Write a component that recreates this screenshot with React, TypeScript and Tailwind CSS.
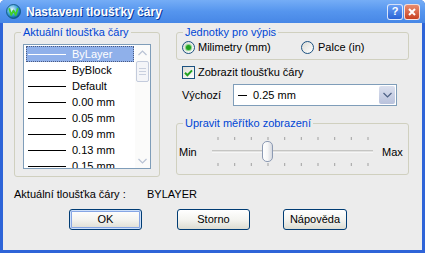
import React from 'react';

// Windows XP style "Nastavení tloušťky čáry" dialog

const font = { fontFamily: '"Liberation Sans", Arial, sans-serif' };

const weights = [
  { label: 'ByLayer', selected: true },
  { label: 'ByBlock' },
  { label: 'Default' },
  { label: '0.00 mm' },
  { label: '0.05 mm' },
  { label: '0.09 mm' },
  { label: '0.13 mm' },
  { label: '0.15 mm' },
];

const ticks = [6, 22.7, 39.3, 56, 72.7, 89.3, 106, 122.7, 139.3, 156];

// --- small pieces --- //
function GroupBox({ title, className, children }: { title: string; className?: string; children?: React.ReactNode }) {
  return (
    <div className={`relative border border-[#d0d0bf] rounded-[3px] ${className ?? ''}`}>
      <span className="absolute -top-[7px] left-[6px] px-[2px] bg-[#ececec] text-[#0046d5] text-[11px] leading-[13px]">
        {title}
      </span>
      {children}
    </div>
  );
}

function Radio({ checked }: { checked?: boolean }) {
  return (
    <span className="w-[13px] h-[13px] rounded-full border border-[#1c5180] bg-linear-to-br from-[#dcdcd6] to-white flex items-center justify-center shrink-0">
      {checked && <span className="w-[5px] h-[5px] rounded-full bg-[#21a121] shadow-[0_0_1px_1px_#7fd17f]" />}
    </span>
  );
}

function Chevron({ up, color }: { up?: boolean; color: string }) {
  return (
    <svg width="9" height="6" viewBox="0 0 9 6">
      <path d={up ? 'M0.5 5L4.5 1L8.5 5' : 'M0.5 1L4.5 5L8.5 1'} fill="none" stroke={color} strokeWidth="1.2" />
    </svg>
  );
}

function XpButton({ label, isDefault, width }: { label: string; isDefault?: boolean; width: string }) {
  return (
    <button
      className={`${width} h-[21px] rounded-[3px] border border-[#003c74] bg-linear-to-b from-white via-[#f4f4f0] to-[#dcdcd2] text-[11px] text-black ${
        isDefault ? 'shadow-[inset_0_0_0_1px_#cde0fa,inset_0_0_0_2px_#86a6e4]' : ''
      }`}
    >
      {label}
    </button>
  );
}

export default function App() {
  return (
    <div style={font} className="w-[425px] h-[253px] flex flex-col bg-[#2e64d8] rounded-t-[5px] overflow-hidden select-none">
      {/* Title bar */}
      <div className="h-[23px] shrink-0 flex items-center bg-linear-to-b from-[#75adf6] via-[#5595ee] to-[#4787e6] pl-[6px] pr-[5px]">
        <svg width="15" height="15" viewBox="0 0 15 15" className="shrink-0">
          <defs>
            <radialGradient id="ic" cx="40%" cy="35%" r="65%">
              <stop offset="0%" stopColor="#e4f6ff" />
              <stop offset="60%" stopColor="#3ba2d8" />
              <stop offset="100%" stopColor="#0b5d8f" />
            </radialGradient>
          </defs>
          <circle cx="7.5" cy="7.5" r="7" fill="url(#ic)" stroke="#0d4f7c" strokeWidth="0.8" />
          <path d="M3.2 4.2L5.2 11L7.5 6.5L9.8 11L11.8 4.2" fill="none" stroke="#3fcf2a" strokeWidth="1.7" strokeLinejoin="round" />
        </svg>
        <span className="ml-[5px] text-white font-bold text-[12px] leading-[14px] [text-shadow:1px_1px_0_#0a3a9a]">
          Nastavení tloušťky čáry
        </span>
        <div className="ml-auto flex gap-[1px]">
          <div className="w-[16px] h-[16px] rounded-[3px] border border-white/80 bg-linear-to-b from-[#6aa0f5] to-[#2a63d6] flex items-center justify-center text-white font-bold text-[11px] leading-none">
            ?
          </div>
          <div className="w-[16px] h-[16px] rounded-[3px] border border-white/80 bg-linear-to-b from-[#e88b6e] to-[#c8401e] flex items-center justify-center">
            <svg width="8" height="8" viewBox="0 0 8 8">
              <path d="M1 1L7 7M7 1L1 7" stroke="white" strokeWidth="2" />
            </svg>
          </div>
        </div>
      </div>

      {/* Body */}
      <div className="flex-1 mx-[3px] mb-[3px] bg-[#ececec] flex flex-col text-[11px] leading-[13px] text-black">
        <div className="flex mt-[9px] ml-[11px]">
          {/* Left: line weight list */}
          <GroupBox title="Aktuální tloušťka čáry" className="w-[146px] h-[145px] pt-[11px] pl-[8px]">
            <div className="w-[128px] h-[125px] border border-[#7f9db9] bg-white flex overflow-hidden">
              <div className="w-[110px] pt-[1px] pl-[2px] flex flex-col">
                {weights.map((w) => (
                  <div
                    key={w.label}
                    className={`h-[16px] shrink-0 flex items-center ${
                      w.selected ? 'bg-[#8fb0ea] text-white outline outline-dotted outline-1 -outline-offset-1 outline-[#4a5a80]' : ''
                    }`}
                  >
                    <span className={`ml-[2px] w-[38px] h-[1px] ${w.selected ? 'bg-white' : 'bg-black'}`} />
                    <span className="ml-[6px]">{w.label}</span>
                  </div>
                ))}
              </div>
              {/* scrollbar */}
              <div className="w-[15px] ml-auto flex flex-col bg-[#fbfbfa]">
                <div className="h-[15px] flex items-center justify-center">
                  <Chevron up color="#b8c2d4" />
                </div>
                <div className="mt-[1px] mx-[1px] h-[21px] rounded-[2px] border border-[#c3cbdc] bg-[#f4f5f8] flex flex-col items-center justify-center gap-[2px]">
                  <span className="w-[7px] h-[1px] bg-[#c8cfde]" />
                  <span className="w-[7px] h-[1px] bg-[#c8cfde]" />
                  <span className="w-[7px] h-[1px] bg-[#c8cfde]" />
                </div>
                <div className="mt-auto h-[15px] flex items-center justify-center">
                  <Chevron color="#b8c2d4" />
                </div>
              </div>
            </div>
          </GroupBox>

          {/* Right column */}
          <div className="ml-[16px] w-[233px] flex flex-col">
            <GroupBox title="Jednotky pro výpis" className="h-[28px] pt-[8px] pl-[5px]">
              <div className="flex items-center">
                <div className="w-[119px] flex items-center">
                  <Radio checked />
                  <span className="ml-[3px]">Milimetry (mm)</span>
                </div>
                <div className="flex items-center">
                  <Radio />
                  <span className="ml-[4px]">Palce (in)</span>
                </div>
              </div>
            </GroupBox>

            <div className="mt-[6px] ml-[6px] flex items-center">
              <span className="w-[13px] h-[13px] border border-[#1c5180] bg-linear-to-br from-[#dcdcd6] to-white flex items-center justify-center">
                <svg width="9" height="8" viewBox="0 0 9 8">
                  <path d="M1 3.8L3.4 6.2L8 1.4" fill="none" stroke="#21a121" strokeWidth="2" />
                </svg>
              </span>
              <span className="ml-[3px]">Zobrazit tloušťku čáry</span>
            </div>

            <div className="mt-[5px] ml-[6px] flex items-center">
              <span className="w-[51px]">Výchozí</span>
              <div className="w-[164px] h-[22px] border border-[#7f9db9] bg-white flex items-center">
                <span className="ml-[4px] w-[9px] h-[1px] bg-black" />
                <span className="ml-[6px]">0.25 mm</span>
                <div className="ml-auto mr-[1px] w-[16px] h-[18px] rounded-[2px] bg-linear-to-b from-[#dbe0ee] to-[#b9c2dc] flex items-center justify-center">
                  <Chevron color="#4d6185" />
                </div>
              </div>
            </div>

            <GroupBox title="Upravit měřítko zobrazení" className="mt-[17px] h-[52px] pt-[11px]">
              <div className="flex items-center">
                <span className="ml-[2px] w-[33px]">Min</span>
                <div className="relative w-[161px] h-[34px]">
                  <svg width="161" height="34" viewBox="0 0 161 34" className="absolute inset-0">
                    {ticks.map((x) => (
                      <g key={x}>
                        <line x1={x} x2={x} y1="2" y2="5" stroke="#a0a0a0" />
                        <line x1={x} x2={x} y1="28" y2="31" stroke="#a0a0a0" />
                      </g>
                    ))}
                    <rect x="0" y="15.5" width="161" height="1" fill="#9d9d9a" />
                    <rect x="0" y="16.5" width="161" height="1" fill="#ffffff" />
                  </svg>
                  <div className="absolute left-[50px] top-[6px] w-[11px] h-[21px] rounded-[5px] border border-[#8c9ab3] bg-linear-to-r from-white via-[#f7f7f7] to-[#d6d9e0]" />
                </div>
                <span className="ml-[9px]">Max</span>
              </div>
            </GroupBox>
          </div>
        </div>

        <div className="mt-[11px] ml-[11px] flex">
          <span className="w-[133px]">Aktuální tloušťka čáry :</span>
          <span>BYLAYER</span>
        </div>

        <div className="mt-[8px] ml-[66px] flex">
          <XpButton label="OK" isDefault width="w-[73px]" />
          <span className="w-[35px]" />
          <XpButton label="Storno" width="w-[73px]" />
          <span className="w-[33px]" />
          <XpButton label="Nápověda" width="w-[64px]" />
        </div>
      </div>
    </div>
  );
}
